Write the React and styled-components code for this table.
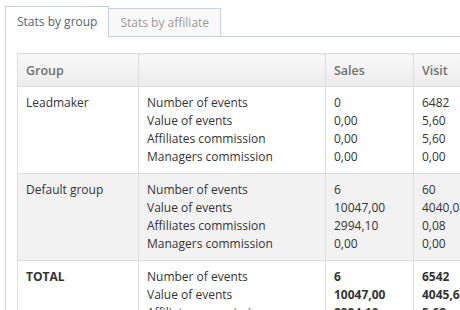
import React from "react";
import styled, { createGlobalStyle } from "styled-components";

const GlobalStyle = createGlobalStyle`
  body {
    margin: 0;
    padding: 6px 0 0 5px;
    background: #fff;
    font-family: "Open Sans", "Liberation Sans", sans-serif;
    overflow: hidden;
  }
`;

const Wrapper = styled.div`
  width: 820px;
`;

const TabBar = styled.ul`
  display: flex;
  align-items: flex-end;
  list-style: none;
  margin: 0;
  padding: 0;
  height: 30px;
  border-bottom: 1px solid #c5d0dc;
`;

const Tab = styled.li`
  box-sizing: border-box;
  height: ${(p) => (p.$active ? "31px" : "28px")};
  margin-bottom: ${(p) => (p.$active ? "-1px" : "0")};
  margin-right: -1px;
  padding: 0 11px;
  display: flex;
  align-items: center;
  font-size: 12px;
  border: 1px solid #c5d0dc;
  border-bottom: ${(p) => (p.$active ? "1px solid #fff" : "none")};
  background: ${(p) => (p.$active ? "#fff" : "#f9f9f9")};
  color: ${(p) => (p.$active ? "#576373" : "#999")};
  position: relative;
  z-index: ${(p) => (p.$active ? 1 : 0)};
`;

const Panel = styled.div`
  border-left: 1px solid #c5d0dc;
  padding: 16px 11px;
`;

const Table = styled.table`
  border-collapse: collapse;
  border: 1px solid #ddd;
  font-size: 12px;
  color: #333;
`;

const HeadCell = styled.th`
  box-sizing: border-box;
  height: 33px;
  width: ${(p) => p.$w}px;
  padding: 0 8px;
  text-align: left;
  font-weight: 600;
  font-size: 12.5px;
  color: #707070;
  border: 1px solid #ddd;
  background: linear-gradient(#f8f8f8, #ececec);
`;

const Row = styled.tr`
  background: ${(p) => (p.$shaded ? "#f2f2f2" : "#fff")};
`;

const Cell = styled.td`
  vertical-align: top;
  padding: 7px 8px;
  line-height: 18px;
  border: 1px solid #ddd;
  font-weight: ${(p) => (p.$bold ? 700 : 400)};
  white-space: nowrap;
  overflow: hidden;
`;

const Line = styled.div``;

const labels = [
  "Number of events",
  "Value of events",
  "Affiliates commission",
  "Managers commission",
];

const rows = [
  {
    name: "Leadmaker",
    sales: ["0", "0,00", "0,00", "0,00"],
    visit: ["6482", "5,60", "5,60", "0,00"],
  },
  {
    name: "Default group",
    shaded: true,
    sales: ["6", "10047,00", "2994,10", "0,00"],
    visit: ["60", "4040,04", "0,08", "0,00"],
  },
  {
    name: "TOTAL",
    total: true,
    sales: ["6", "10047,00", "2994,10", "0,00"],
    visit: ["6542", "4045,64", "5,68", "0,00"],
  },
];

function Lines({ items }) {
  return items.map((t, i) => <Line key={i}>{t}</Line>);
}

export default function App() {
  return (
    <Wrapper>
      <GlobalStyle />
      <TabBar>
        <Tab $active>Stats by group</Tab>
        <Tab>Stats by affiliate</Tab>
      </TabBar>
      <Panel>
        <Table>
          <thead>
            <tr>
              <HeadCell $w={121}>Group</HeadCell>
              <HeadCell $w={187}></HeadCell>
              <HeadCell $w={88}>Sales</HeadCell>
              <HeadCell $w={90}>Visit</HeadCell>
              <HeadCell $w={90}>Lead</HeadCell>
            </tr>
          </thead>
          <tbody>
            {rows.map((r) => (
              <Row key={r.name} $shaded={r.shaded}>
                <Cell $bold={r.total}>{r.name}</Cell>
                <Cell>
                  <Lines items={labels} />
                </Cell>
                <Cell $bold={r.total}>
                  <Lines items={r.sales} />
                </Cell>
                <Cell $bold={r.total}>
                  <Lines items={r.visit} />
                </Cell>
                <Cell $bold={r.total}>
                  <Lines items={["0", "0,00", "0,00", "0,00"]} />
                </Cell>
              </Row>
            ))}
          </tbody>
        </Table>
      </Panel>
    </Wrapper>
  );
}
